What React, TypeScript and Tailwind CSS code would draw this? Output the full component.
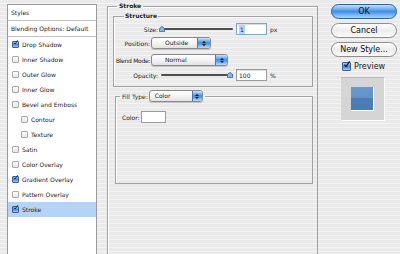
import React from "react";

type Style = { name: string; on: boolean; sub?: boolean; active?: boolean };

const styles: Style[] = [
  { name: "Drop Shadow", on: true },
  { name: "Inner Shadow", on: false },
  { name: "Outer Glow", on: false },
  { name: "Inner Glow", on: false },
  { name: "Bevel and Emboss", on: false },
  { name: "Contour", on: false, sub: true },
  { name: "Texture", on: false, sub: true },
  { name: "Satin", on: false },
  { name: "Color Overlay", on: false },
  { name: "Gradient Overlay", on: true },
  { name: "Pattern Overlay", on: false },
  { name: "Stroke", on: true, active: true },
];

function Box({ on, big }: { on: boolean; big?: boolean }) {
  const size = big ? "h-[9px] w-[9px]" : "h-[7px] w-[7px]";
  if (!on) {
    return (
      <span
        className={`${size} shrink-0 rounded-[1px] border border-[#a9a9a9] bg-gradient-to-b from-white to-[#e6e6e6]`}
      />
    );
  }
  return (
    <span
      className={`${size} relative shrink-0 rounded-[1px] border border-[#3a5f93] bg-gradient-to-b from-[#a9cdf3] via-[#4a8ad8] to-[#9fcaf5]`}
    >
      <svg viewBox="0 0 10 10" className="absolute left-[0px] top-[-2px] h-full w-full overflow-visible">
        <path d="M2 5.2 L4.2 8 L9.5 0.5" fill="none" stroke="#0c1f3f" strokeWidth="1.8" />
      </svg>
    </span>
  );
}

function Slider({ end }: { end?: boolean }) {
  return (
    <div className="relative h-[12px] w-[72px]">
      <div className="absolute left-0 right-0 top-[5px] h-[2px] rounded-full bg-[#4f4f4f]" />
      <svg
        width="6"
        height="6"
        viewBox="0 0 6 6"
        className={end ? "absolute right-[0px] top-[3px]" : "absolute left-[-2px] top-[3px]"}
      >
        <path d="M3 0.4 L5.6 2.6 V5.6 H0.4 V2.6 Z" fill="#86b6ea" stroke="#2d5f9d" strokeWidth="0.8" />
      </svg>
    </div>
  );
}

function Arrows({ w }: { w: string }) {
  return (
    <span
      className={`${w} flex flex-col items-center justify-center gap-[1px] rounded-r-[3px] border-l border-[#4a78b0] bg-gradient-to-b from-[#c6e2fb] via-[#3f8ce4] to-[#b3dafc]`}
    >
      <svg width="4" height="2" viewBox="0 0 4 2">
        <path d="M0 2 L2 0 L4 2 Z" fill="#111" />
      </svg>
      <svg width="4" height="2" viewBox="0 0 4 2">
        <path d="M0 0 L4 0 L2 2 Z" fill="#111" />
      </svg>
    </span>
  );
}

function Popup({ label, w, pad, arrow }: { label: string; w: string; pad: string; arrow: string }) {
  return (
    <div
      className={`${w} flex h-[12px] shrink-0 overflow-hidden rounded-[3px] border border-[#8a8a8a] bg-gradient-to-b from-white via-[#f4f4f4] to-[#e2e2e2] shadow-[0_1px_1px_rgba(0,0,0,0.18)]`}
    >
      <span className={`${pad} flex-1 whitespace-nowrap text-[6px] leading-[10px]`}>{label}</span>
      <Arrows w={arrow} />
    </div>
  );
}

function Field({ value, focus }: { value: string; focus?: boolean }) {
  return (
    <div
      className={`ml-[3px] flex h-[12px] w-[31px] items-center border bg-white pl-[2px] text-[6px] shadow-[inset_0_1px_1px_rgba(0,0,0,0.15)] ${
        focus ? "border-[#7ea3d2]" : "border-[#9b9b9b]"
      }`}
    >
      <span className={focus ? "bg-[#b6d4fb] px-[1px]" : ""}>{value}</span>
    </div>
  );
}

export default function App() {
  return (
    <div className="flex h-[254px] w-[400px] overflow-hidden bg-[repeating-linear-gradient(180deg,#eaeaea_0px,#eaeaea_3px,#f3f3f3_3px,#f3f3f3_4px)] font-['DejaVu_Sans',Verdana,sans-serif] text-[#222]">
      {/* styles list */}
      <div className="ml-[7px] mt-[4px] h-[260px] w-[90px] shrink-0 border border-[#9a9a9a] bg-white">
        <div className="h-[16px] border-b border-[#c2c2c2] pl-[3px] text-[6px] leading-[15px]">Styles</div>
        <div className="h-[16px] border-b border-[#c2c2c2] pl-[3px] text-[6px] leading-[15px]">
          Blending Options: Default
        </div>
        {styles.map((s) => (
          <div
            key={s.name}
            className={`flex h-[15px] items-center gap-[3px] text-[6px] ${s.sub ? "pl-[13px]" : "pl-[4px]"} ${
              s.active ? "bg-[#b5d3f7]" : ""
            }`}
          >
            <Box on={s.on} />
            <span>{s.name}</span>
          </div>
        ))}
      </div>

      {/* stroke settings */}
      <fieldset className="ml-[10px] mt-[2px] h-[260px] w-[211px] shrink-0 border border-[#a2a2a2] pl-[5px] pr-[4px] shadow-[inset_1px_1px_0_#fff]">
        <legend className="ml-[4px] px-[2px] text-[6px] font-bold leading-[8px]">Stroke</legend>

        <fieldset className="mt-[2px] h-[75px] w-[200px] border border-[#a2a2a2] shadow-[inset_1px_1px_0_#fff]">
          <legend className="ml-[10px] px-[1px] text-[6px] font-bold leading-[8px]">Structure</legend>

          <div className="mt-[3px] flex h-[12px] items-center text-[6px]">
            <span className="flex w-[45px] justify-end whitespace-nowrap pr-[1px]">Size:</span>
            <span className="ml-[2px]">
              <Slider />
            </span>
            <Field value="1" focus />
            <span className="ml-[3px]">px</span>
          </div>

          <div className="mt-[2px] flex h-[12px] items-center text-[6px]">
            <span className="flex w-[36px] justify-end whitespace-nowrap">Position:</span>
            <span className="ml-[1px]">
              <Popup label="Outside" w="w-[60px]" pad="pl-[13px]" arrow="w-[13px]" />
            </span>
          </div>

          <div className="mt-[5px] flex h-[12px] items-center text-[6px]">
            <span className="flex w-[36px] justify-end whitespace-nowrap tracking-[-0.3px]">Blend Mode:</span>
            <span className="ml-[1px]">
              <Popup label="Normal" w="w-[77px]" pad="pl-[13px]" arrow="w-[12px]" />
            </span>
          </div>

          <div className="mt-[3px] flex h-[12px] items-center text-[6px]">
            <span className="flex w-[45px] justify-end whitespace-nowrap pr-[1px]">Opacity:</span>
            <span className="ml-[2px]">
              <Slider end />
            </span>
            <Field value="100" />
            <span className="ml-[3px]">%</span>
          </div>
        </fieldset>

        <fieldset className="ml-[2px] mt-[3px] h-[94px] w-[198px] border border-[#a2a2a2] shadow-[inset_1px_1px_0_#fff]">
          <legend className="ml-[4px] flex items-center px-[2px] text-[6px]">
            <span className="whitespace-nowrap">Fill Type:</span>
            <span className="ml-[1px]">
              <Popup label="Color" w="w-[54px]" pad="pl-[5px]" arrow="w-[10px]" />
            </span>
          </legend>
          <div className="ml-[6px] mt-[9px] flex items-center text-[6px]">
            <span>Color:</span>
            <span className="ml-[1px] h-[12px] w-[25px] border border-[#9b9b9b] bg-white" />
          </div>
        </fieldset>
      </fieldset>

      {/* buttons */}
      <div className="ml-[13px] flex w-[66px] shrink-0 flex-col">
        <button className="mt-[4px] h-[15px] w-[66px] rounded-full border border-[#2f5f9c] bg-gradient-to-b from-[#c4e0fb] via-[#3f8fe8] to-[#a9d6fd] text-[8px] leading-[13px] text-[#111]">
          OK
        </button>
        <button className="mt-[4px] h-[15px] w-[66px] rounded-full border border-[#8d8d8d] bg-gradient-to-b from-white via-[#ededed] to-[#fafafa] text-[8px] leading-[13px] text-[#111]">
          Cancel
        </button>
        <button className="mt-[4px] h-[15px] w-[66px] rounded-full border border-[#8d8d8d] bg-gradient-to-b from-white via-[#ededed] to-[#fafafa] text-[8px] leading-[13px] text-[#111]">
          New Style...
        </button>
        <div className="ml-[11px] mt-[5px] flex h-[9px] items-center gap-[3px] text-[8px]">
          <Box on big />
          <span>Preview</span>
        </div>
        <div className="ml-[10px] mt-[6px] flex h-[44px] w-[44px] items-center justify-center border-b border-r border-t border-b-white border-r-white border-t-[#b9b9b9] bg-[#d5d5d5]">
          <div className="h-[24px] w-[23px] border-b border-r border-white bg-[linear-gradient(180deg,#6b97cb_0%,#6391c6_50%,#4c7db9_50%,#4a7bb7_100%)]" />
        </div>
      </div>
    </div>
  );
}
